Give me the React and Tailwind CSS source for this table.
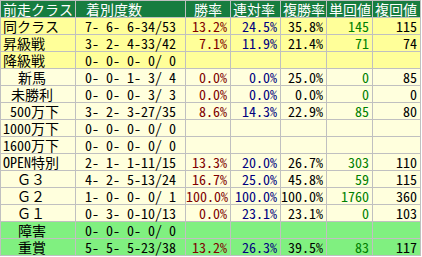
import React from 'react';

const rows = [
  { name: '同クラス', pad: 'pl-[2px]', rec: '7- 6- 6-34/53', win: '13.2%', ren: '24.5%', fuku: '35.8%', tan: '145', fk: '115', tone: 'yellow' },
  { name: '昇級戦', pad: 'pl-[2px]', rec: '3- 2- 4-33/42', win: '7.1%', ren: '11.9%', fuku: '21.4%', tan: '71', fk: '74', tone: 'yellow' },
  { name: '降級戦', pad: 'pl-[2px]', rec: '0- 0- 0- 0/ 0', tone: 'yellow' },
  { name: '新馬', pad: 'pl-[17px]', rec: '0- 0- 1- 3/ 4', win: '0.0%', ren: '0.0%', fuku: '25.0%', tan: '0', fk: '85', tone: 'cream' },
  { name: '未勝利', pad: 'pl-[10px]', rec: '0- 0- 0- 3/ 3', win: '0.0%', ren: '0.0%', fuku: '0.0%', tan: '0', fk: '0', tone: 'cream' },
  { name: '500万下', pad: 'pl-[9px]', rec: '3- 2- 3-27/35', win: '8.6%', ren: '14.3%', fuku: '22.9%', tan: '85', fk: '80', tone: 'cream' },
  { name: '1000万下', pad: 'pl-[2px]', rec: '0- 0- 0- 0/ 0', tone: 'cream' },
  { name: '1600万下', pad: 'pl-[2px]', rec: '0- 0- 0- 0/ 0', tone: 'cream' },
  { name: 'OPEN特別', pad: 'pl-[2px]', rec: '2- 1- 1-11/15', win: '13.3%', ren: '20.0%', fuku: '26.7%', tan: '303', fk: '110', tone: 'cream' },
  { name: 'Ｇ３', pad: 'pl-[16px]', rec: '4- 2- 5-13/24', win: '16.7%', ren: '25.0%', fuku: '45.8%', tan: '59', fk: '115', tone: 'cream' },
  { name: 'Ｇ２', pad: 'pl-[16px]', rec: '1- 0- 0- 0/ 1', win: '100.0%', ren: '100.0%', fuku: '100.0%', tan: '1760', fk: '360', tone: 'cream' },
  { name: 'Ｇ１', pad: 'pl-[16px]', rec: '0- 3- 0-10/13', win: '0.0%', ren: '23.1%', fuku: '23.1%', tan: '0', fk: '103', tone: 'cream' },
  { name: '障害', pad: 'pl-[17px]', rec: '0- 0- 0- 0/ 0', tone: 'green' },
  { name: '重賞', pad: 'pl-[17px]', rec: '5- 5- 5-23/38', win: '13.2%', ren: '26.3%', fuku: '39.5%', tan: '83', fk: '117', tone: 'green' },
];

const toneBg = {
  yellow: 'bg-[#ffff99]',
  cream: 'bg-[#ffffdd]',
  green: 'bg-[#80f080]',
};

const cell = 'border border-[#c0c0c0] h-[17px] leading-[16px] p-0 whitespace-pre';

export default function App() {
  return (
    <div className="w-[422px] h-[257px] bg-white" style={{ fontFamily: '"Noto Sans Mono CJK JP", "Noto Sans CJK JP", "Liberation Mono", monospace' }}>
      <table className="border-collapse table-fixed w-[420px] text-[14px] text-black">
        <colgroup>
          <col className="w-[75px]" />
          <col className="w-[110px]" />
          <col className="w-[45px]" />
          <col className="w-[50px]" />
          <col className="w-[46px]" />
          <col className="w-[46px]" />
          <col className="w-[48px]" />
        </colgroup>
        <thead>
          <tr className="bg-[#177d3f] text-white">
            <th className={`${cell} h-[16px] font-normal text-left pl-[2px]`}>前走クラス</th>
            <th className={`${cell} h-[16px] font-normal text-left pl-[10px]`}>着別度数</th>
            <th className={`${cell} h-[16px] font-normal text-center`}>勝率</th>
            <th className={`${cell} h-[16px] font-normal text-left pl-[2px]`}>連対率</th>
            <th className={`${cell} h-[16px] font-normal text-left pl-[2px]`}>複勝率</th>
            <th className={`${cell} h-[16px] font-normal text-left pl-[2px]`}>単回値</th>
            <th className={`${cell} h-[16px] font-normal text-left pl-[2px]`}>複回値</th>
          </tr>
        </thead>
        <tbody>
          {rows.map((r) => (
            <tr key={r.name} className={toneBg[r.tone]}>
              <td className={`${cell} text-left ${r.pad}`}>{r.name}</td>
              <td className={`${cell} text-left pl-[9px]`}>{r.rec}</td>
              <td className={`${cell} text-right pr-[3px] text-[#800000]`}>{r.win || ''}</td>
              <td className={`${cell} text-right pr-[3px] text-[#000080]`}>{r.ren || ''}</td>
              <td className={`${cell} text-right pr-[3px]`}>{r.fuku || ''}</td>
              <td className={`${cell} text-right pr-[3px] text-[#008000]`}>{r.tan || ''}</td>
              <td className={`${cell} text-right pr-[3px]`}>{r.fk || ''}</td>
            </tr>
          ))}
        </tbody>
      </table>
    </div>
  );
}
